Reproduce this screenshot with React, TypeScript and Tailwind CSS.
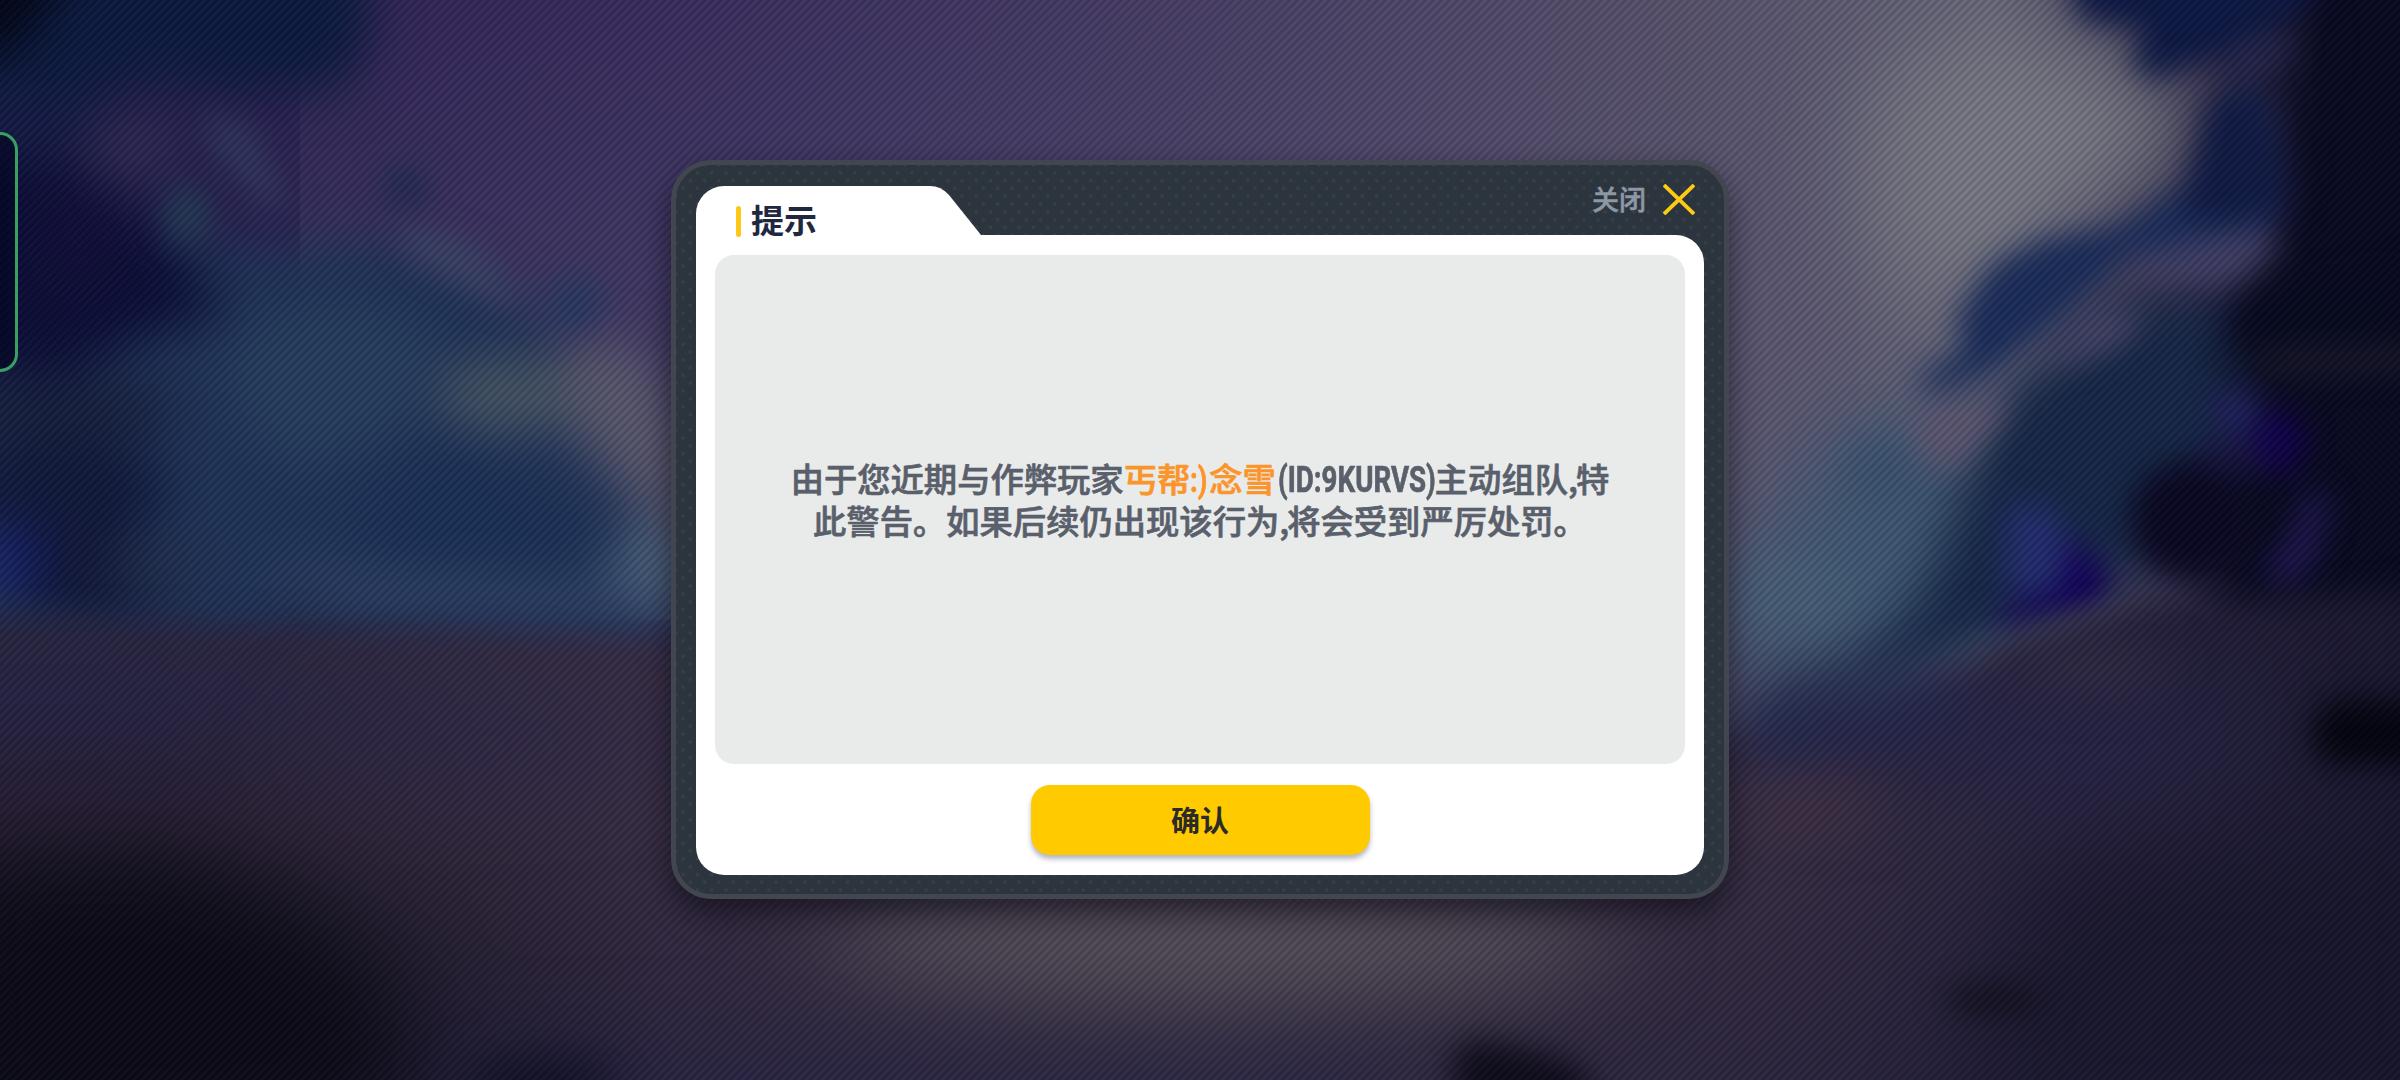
import React from "react";

const CJK = "font-['Noto_Sans_CJK_SC',sans-serif]";

function Scenery() {
  return (
    <svg className="absolute inset-0 h-full w-full" viewBox="0 0 2400 1080" preserveAspectRatio="none" aria-hidden="true">
      <defs>
        <linearGradient id="sky" x1="0" x2="1" y1="0" y2="0">
          <stop offset="0" stopColor="#1c1c48" />
          <stop offset="0.16" stopColor="#33275a" />
          <stop offset="0.3" stopColor="#3c3062" />
          <stop offset="0.5" stopColor="#4a4068" />
          <stop offset="0.7" stopColor="#5a546f" />
          <stop offset="0.83" stopColor="#67667a" />
          <stop offset="0.92" stopColor="#302a4a" />
          <stop offset="0.97" stopColor="#0b0c24" />
          <stop offset="1" stopColor="#070920" />
        </linearGradient>
        <linearGradient id="skyLift" x1="0" x2="0" y1="0" y2="1">
          <stop offset="0" stopColor="#5a5a78" stopOpacity="0" />
          <stop offset="1" stopColor="#5e5a74" stopOpacity="0.55" />
        </linearGradient>
        <linearGradient id="groundL" x1="0" x2="0" y1="0" y2="1">
          <stop offset="0" stopColor="#2c2740" />
          <stop offset="0.2" stopColor="#272445" />
          <stop offset="0.42" stopColor="#281f34" />
          <stop offset="0.66" stopColor="#14121f" />
          <stop offset="1" stopColor="#060513" />
        </linearGradient>
        <linearGradient id="groundR" x1="0" x2="1" y1="0" y2="0">
          <stop offset="0.08" stopColor="#3a2f42" stopOpacity="0" />
          <stop offset="0.29" stopColor="#392f46" />
          <stop offset="0.5" stopColor="#453c4c" />
          <stop offset="0.72" stopColor="#3a3046" />
          <stop offset="0.85" stopColor="#28233f" />
          <stop offset="1" stopColor="#18162f" />
        </linearGradient>
        <linearGradient id="groundFade" x1="0" x2="0" y1="0" y2="1">
          <stop offset="0.4" stopColor="#17132c" stopOpacity="0" />
          <stop offset="1" stopColor="#1c1a3a" stopOpacity="0.5" />
        </linearGradient>
        <filter id="b12" x="-20%" y="-20%" width="140%" height="140%" colorInterpolationFilters="sRGB"><feGaussianBlur stdDeviation="15" /></filter>
        <filter id="b25" x="-30%" y="-30%" width="160%" height="160%" colorInterpolationFilters="sRGB"><feGaussianBlur stdDeviation="25" /></filter>
        <filter id="b45" x="-30%" y="-30%" width="160%" height="160%" colorInterpolationFilters="sRGB"><feGaussianBlur stdDeviation="48" /></filter>
      </defs>

      <rect width="2400" height="1080" fill="url(#sky)" />
      <rect x="300" width="1560" height="620" fill="url(#skyLift)" />

      {/* distant hills and foliage, left */}
      <g filter="url(#b25)">
        <path d="M-60 -60H360L372 30L345 88L240 92L150 75L80 100L-60 90Z" fill="#0d1b42" />
        <path d="M-60 110L60 130L140 220L250 250L380 240L470 270L560 330L640 440L680 660H-60Z" fill="#20345a" />
        <path d="M-60 80L80 100L130 170L60 200L-60 170Z" fill="#171c48" />
        <path d="M-60 -60H90L20 50L-60 70Z" fill="#020619" />
        <path d="M-60 160L60 160L140 215L230 310L140 340L60 380L-60 360Z" fill="#0c0e38" />
        <ellipse cx="80" cy="235" rx="45" ry="60" fill="#110e3a" />
        <ellipse cx="130" cy="150" rx="50" ry="26" fill="#332c55" />
        <ellipse cx="50" cy="410" rx="130" ry="36" fill="#18213f" />
        <ellipse cx="60" cy="490" rx="110" ry="50" fill="#121a3d" />
        <ellipse cx="90" cy="575" rx="90" ry="46" fill="#11173a" />
        <ellipse cx="160" cy="568" rx="60" ry="22" fill="#24314f" />
        <ellipse cx="10" cy="560" rx="30" ry="32" fill="#172175" />
        <path d="M230 340L330 300L440 330L410 430L300 470L240 420Z" fill="#273f60" />
        <ellipse cx="510" cy="395" rx="75" ry="38" fill="#475565" />
        <path d="M560 340L640 350L700 440L700 580L640 510L570 430Z" fill="#5a596f" />
        <path d="M360 520L460 430L540 510L600 560L500 570L360 560Z" fill="#1b3158" />
        <ellipse cx="655" cy="575" rx="45" ry="48" fill="#4b647e" />
        <path d="M260 570L660 590L660 625L280 600Z" fill="#34466a" />
        <ellipse cx="300" cy="610" rx="34" ry="18" fill="#1d2c4e" />
      </g>
      <g filter="url(#b12)">
        <path d="M205 110L250 130L290 200L270 210L215 150Z" fill="#323d62" fillOpacity="0.8" />
        <ellipse cx="187" cy="215" rx="20" ry="28" fill="#264058" fillOpacity="0.9" />
        <path d="M400 225L470 245L530 310L480 295L410 255Z" fill="#41486a" fillOpacity="0.8" />
        <ellipse cx="405" cy="188" rx="24" ry="24" fill="#232b54" />
        <ellipse cx="574" cy="303" rx="28" ry="28" fill="#293a64" />
      </g>

      {/* moon glow and tree, right */}
      <g filter="url(#b45)">
        <path d="M1890 60L2040 20L2180 90L2200 150L2080 220L1960 310L1900 300L1860 180Z" fill="#7a7b86" />
        <path d="M1740 560L1850 440L1980 400L2060 560L1980 680L1740 720Z" fill="#405a76" />
      </g>
      <g filter="url(#b25)">
        <path d="M2290 -60H2460V700H2240L2200 520L2220 330L2290 230L2300 120L2330 40Z" fill="#090a22" />
        <path d="M1985 410L2060 350L2130 300L2230 300L2240 440L2160 560L2060 610L1930 660L1760 740L1740 720L1850 670L1920 600L1960 500Z" fill="#172849" />
        <ellipse cx="1880" cy="470" rx="40" ry="30" fill="#36506f" />
        <ellipse cx="1790" cy="600" rx="60" ry="40" fill="#4a627a" />
      </g>
      <g filter="url(#b12)">
        <path d="M2065 -40H2340L2300 10L2220 55L2150 80L2130 55L2150 30L2080 20Z" fill="#0d1945" />
        <path d="M2220 55L2290 30L2290 60L2230 80Z" fill="#27284f" />
        <path d="M1955 320L1990 265L2040 240L2120 225L2195 180L2215 125L2240 80L2270 100L2290 200L2250 245L2130 260L2060 320L1990 375L1925 395L1920 375L1965 350Z" fill="#1b2d5b" />
        <path d="M2210 100L2260 85L2290 200L2230 225L2180 215Z" fill="#101b46" />
        <path d="M2115 258L2260 230L2280 245L2230 285L2150 280Z" fill="#434168" />
        <path d="M2070 330L2120 305L2145 325L2110 350L2040 370Z" fill="#454569" />
        <path d="M1910 410L1990 395L2010 405L1970 455L1945 475L1920 450Z" fill="#5d5772" />
        <path d="M2240 300L2400 270V340L2230 345Z" fill="#070a20" />
        <path d="M2260 350L2420 345V372L2260 375Z" fill="#19182a" />
        <ellipse cx="2190" cy="520" rx="60" ry="60" fill="#0a0823" />
        <ellipse cx="2235" cy="412" rx="24" ry="22" fill="#222462" />
        <ellipse cx="2278" cy="442" rx="26" ry="32" fill="#120050" />
        <ellipse cx="2235" cy="455" rx="40" ry="14" fill="#201650" fillOpacity="0.7" />
        <path d="M2310 490L2330 500L2310 570L2275 590L2265 570L2290 540Z" fill="#211856" />
        <path d="M2005 510L2040 500L2080 550L2060 600L2005 590Z" fill="#242e70" />
        <path d="M2070 535L2115 580L2090 605L1990 630L2010 605L2060 590Z" fill="#13005c" />
      </g>

      {/* ground */}
      <g filter="url(#b12)">
        <path d="M-60 615L380 628L700 640L1740 735L1900 705L2010 640L2140 605L2460 590V1140H-60Z" fill="url(#groundL)" />
        <path d="M-60 615L380 628L700 640L1740 745L1900 705L2010 640L2140 605L2460 590V1140H-60Z" fill="url(#groundR)" />
        <path d="M-60 615H2460V1140H-60Z" fill="url(#groundFade)" />
      </g>
      <g filter="url(#b45)">
        <path d="M-60 880L180 870L340 940L400 1010L400 1140H-60Z" fill="#0c0b17" />
        <path d="M1720 690L1900 700L2120 690L2300 720L2100 790L1800 760Z" fill="#262448" />
        <ellipse cx="480" cy="745" rx="180" ry="30" fill="#2b2750" fillOpacity="0.6" />
        <ellipse cx="1220" cy="935" rx="400" ry="50" fill="#5f5861" />
        <path d="M2040 860H2460V1140H1960Z" fill="#17152b" fillOpacity="0.7" />
        <path d="M450 1070H1400V1140H450Z" fill="#2a2648" />
      </g>
      <g filter="url(#b25)">
        <path d="M1740 715L1860 700L1960 665L1960 720L1760 765Z" fill="#232950" />
        <ellipse cx="2095" cy="668" rx="70" ry="18" fill="#352f47" />
        <ellipse cx="1810" cy="805" rx="70" ry="24" fill="#403044" />
        <ellipse cx="540" cy="1085" rx="80" ry="24" fill="#0b0c20" />
      </g>
      <g filter="url(#b12)">
        <path d="M2325 700H2460V765H2325L2310 735Z" fill="#03040f" />
        <ellipse cx="1995" cy="1000" rx="52" ry="15" fill="#12101d" />
        <path d="M1470 1040L1510 1045L1570 1060L1610 1110H1460L1450 1060Z" fill="#0f0c1c" />
      </g>
    </svg>
  );
}

function CloseIcon() {
  return (
    <svg className="h-[31px] w-[32px]" viewBox="0 0 32 31" fill="none" stroke="#fdcb16" strokeWidth="3.8" aria-hidden="true">
      <path d="M1 1L31 30M31 1L1 30" />
    </svg>
  );
}

function Message() {
  return (
    <p className={`${CJK} text-[33.3px] leading-[41.5px] font-medium whitespace-nowrap text-[#5a606b] [-webkit-text-stroke:0.7px_currentColor]`}>
      <span className="flex justify-center">
        <span>由于您近期与作弊玩家</span>
        <span className="text-[#fb952a]">丐帮</span>
        <span className="w-[19px] text-[#fb952a]">
          <span className="inline-block origin-left scale-x-[0.78] font-['Roboto',sans-serif] text-[35px] font-bold leading-none">:)</span>
        </span>
        <span className="text-[#fb952a]">念雪</span>
        <span className="w-[159px]">
          <span className="ml-0.5 inline-block origin-left scale-x-[0.77] font-['Roboto',sans-serif] text-[36px] font-bold leading-none">(ID:9KURVS)</span>
        </span>
        <span>主动组队</span>
        <span className="w-[8px]">,</span>
        <span>特</span>
      </span>
      <span className="flex justify-center">
        <span>此警告。如果后续仍出现该行为</span>
        <span className="w-[8px]">,</span>
        <span>将会受到严厉处罚。</span>
      </span>
    </p>
  );
}

export default function App() {
  return (
    <main className="relative flex h-[1080px] w-[2400px] items-start justify-center overflow-hidden bg-[#1b1a3a] pt-[160px]">
      <Scenery />
      <div className="absolute inset-0 bg-[repeating-linear-gradient(135deg,rgba(0,0,0,0.14)_0px,rgba(0,0,0,0.14)_1.2px,rgba(255,255,255,0.02)_2.8px,rgba(255,255,255,0.02)_4px,rgba(0,0,0,0.14)_5.66px)]" />
      <div className="absolute top-[132px] -left-10 h-[240px] w-[58px] rounded-[18px] border-[3px] border-[#3a9f63] bg-[#030522]/60" />

      <section className="relative flex h-[739px] w-[1058px] flex-col rounded-[40px] border-[5px] border-[#42464f] bg-[#2c343d] bg-[radial-gradient(circle,#364049_1.2px,transparent_2.2px),radial-gradient(circle,#364049_1.2px,transparent_2.2px)] bg-[size:14.3px_15.6px] bg-[position:0px_0px,7.15px_7.8px] px-5 pt-[21px] pb-[19px] shadow-[0_14px_30px_rgba(10,8,20,0.6)]">
        <header className="flex h-[49px] items-start justify-between">
          <div className="relative flex h-[49px] w-[286px] items-center pl-10">
            <svg className="absolute inset-0 h-[50px] w-[286px]" viewBox="0 0 286 50" aria-hidden="true">
              <path d="M0 50V28A28 28 0 0 1 28 0H234Q245 0 253 9L285 49V50Z" fill="#fff" />
            </svg>
            <span className="relative mt-[21px] h-[31px] w-[5px] rounded-full bg-[#fcc715]" />
            <h1 className={`${CJK} relative mt-[18px] ml-[10px] text-[33px] leading-none font-bold text-[#20273e]`}>提示</h1>
          </div>
          <button className={`${CJK} -mt-[3px] mr-[9px] flex items-center text-[27px] leading-[32px] font-medium text-[#8d98a5]`}>
            <span className="mr-[17px] [-webkit-text-stroke:0.5px_currentColor]">关闭</span>
            <CloseIcon />
          </button>
        </header>

        <div className="flex flex-1 flex-col items-center rounded-[28px] rounded-tl-none bg-white px-[19px] pt-5">
          <div className="flex h-[509px] w-full items-center justify-center rounded-[19px] bg-[#e8ebea] pb-[22px]">
            <Message />
          </div>
          <button className={`${CJK} mt-[21px] flex h-[70px] w-[339px] items-center justify-center rounded-[19px] bg-[#ffca00] pb-[2px] text-[29px] leading-none font-bold text-[#2b2c27] shadow-[0_4px_5px_rgba(90,90,130,0.45)]`}>
            确认
          </button>
        </div>
      </section>
    </main>
  );
}
